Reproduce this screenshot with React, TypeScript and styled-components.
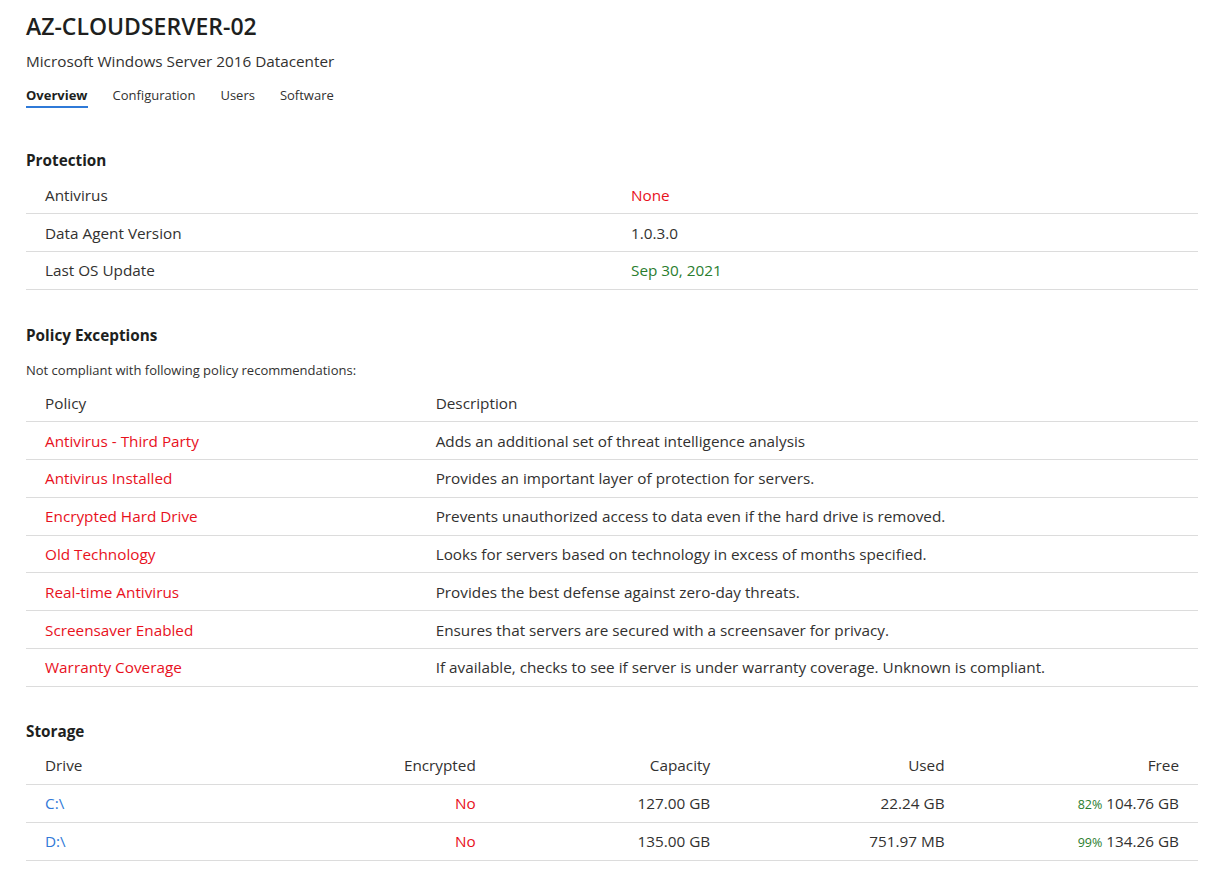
import styled, { createGlobalStyle } from 'styled-components'

const GlobalStyle = createGlobalStyle`
  body {
    margin: 0;
    background: #ffffff;
    color: #323130;
    font-family: "Open Sans", "Noto Sans", sans-serif;
  }
`

type Align = 'left' | 'right'

type Drive = {
  name: string;
  encrypted: string;
  capacity: string;
  used: string;
  freePct: string;
  free: string;
}

const protection = [
  { label: 'Antivirus', value: 'None', tone: 'bad' },
  { label: 'Data Agent Version', value: '1.0.3.0', tone: 'plain' },
  { label: 'Last OS Update', value: 'Sep 30, 2021', tone: 'good' },
]

const policies = [
  ['Antivirus - Third Party', 'Adds an additional set of threat intelligence analysis'],
  ['Antivirus Installed', 'Provides an important layer of protection for servers.'],
  ['Encrypted Hard Drive', 'Prevents unauthorized access to data even if the hard drive is removed.'],
  ['Old Technology', 'Looks for servers based on technology in excess of months specified.'],
  ['Real-time Antivirus', 'Provides the best defense against zero-day threats.'],
  ['Screensaver Enabled', 'Ensures that servers are secured with a screensaver for privacy.'],
  ['Warranty Coverage', 'If available, checks to see if server is under warranty coverage. Unknown is compliant.'],
]

const drives: Drive[] = [
  { name: 'C:\\', encrypted: 'No', capacity: '127.00 GB', used: '22.24 GB', freePct: '82%', free: '104.76 GB' },
  { name: 'D:\\', encrypted: 'No', capacity: '135.00 GB', used: '751.97 MB', freePct: '99%', free: '134.26 GB' },
]

const tabs = ['Overview', 'Configuration', 'Users', 'Software']

export default function App() {
  return (
    <>
      <GlobalStyle />
      <Page>
        <Title>AZ-CLOUDSERVER-02</Title>
        <Subtitle>Microsoft Windows Server 2016 Datacenter</Subtitle>
        <Tabs>
          {tabs.map((t, i) => (
            <Tab key={t} $active={i === 0}>{t}</Tab>
          ))}
        </Tabs>

        <Section $top={42}>
          <SectionTitle>Protection</SectionTitle>
          <Table>
            <colgroup>
              <col style={{ width: '50%' }} />
              <col style={{ width: '50%' }} />
            </colgroup>
            <tbody>
              {protection.map(row => (
                <tr key={row.label}>
                  <Cell>{row.label}</Cell>
                  <Cell $tone={row.tone}>{row.value}</Cell>
                </tr>
              ))}
            </tbody>
          </Table>
        </Section>

        <Section $top={35}>
          <SectionTitle>Policy Exceptions</SectionTitle>
          <Note>Not compliant with following policy recommendations:</Note>
          <Table>
            <colgroup>
              <col style={{ width: '33.333%' }} />
              <col style={{ width: '66.667%' }} />
            </colgroup>
            <thead>
              <tr>
                <Head>Policy</Head>
                <Head>Description</Head>
              </tr>
            </thead>
            <tbody>
              {policies.map(([name, desc]) => (
                <tr key={name}>
                  <Cell $tone="bad">{name}</Cell>
                  <Cell>{desc}</Cell>
                </tr>
              ))}
            </tbody>
          </Table>
        </Section>

        <Section $top={34}>
          <SectionTitle>Storage</SectionTitle>
          <Table>
            <thead>
              <tr>
                <Head>Drive</Head>
                <Head $align="right">Encrypted</Head>
                <Head $align="right">Capacity</Head>
                <Head $align="right">Used</Head>
                <Head $align="right">Free</Head>
              </tr>
            </thead>
            <tbody>
              {drives.map(d => (
                <tr key={d.name}>
                  <Cell $tone="link">{d.name}</Cell>
                  <Cell $align="right" $tone="bad">{d.encrypted}</Cell>
                  <Cell $align="right">{d.capacity}</Cell>
                  <Cell $align="right">{d.used}</Cell>
                  <Cell $align="right">
                    <Pct>{d.freePct}</Pct> {d.free}
                  </Cell>
                </tr>
              ))}
            </tbody>
          </Table>
        </Section>
      </Page>
    </>
  )
}

const toneColor = (tone?: string) => {
  switch (tone) {
    case 'bad': return '#e8111d'
    case 'good': return '#2a7d2e'
    case 'link': return '#3179d8'
    default: return '#323130'
  }
}

const Page = styled.div`
  padding: 10px 15px 16px 26px;
`

const Title = styled.h1`
  margin: 0;
  font-size: 23px;
  font-weight: 600;
  line-height: 32px;
  color: #201f1e;
`

const Subtitle = styled.div`
  margin-top: 9px;
  font-size: 15.3px;
  line-height: 20px;
`

const Tabs = styled.div`
  display: flex;
  gap: 25px;
  margin-top: 15px;
`

const Tab = styled.div<{ $active?: boolean }>`
  font-size: 13px;
  line-height: 18px;
  padding-bottom: 2px;
  font-weight: ${p => (p.$active ? 700 : 400)};
  color: ${p => (p.$active ? '#201f1e' : '#323130')};
  border-bottom: 2px solid ${p => (p.$active ? '#2f7ad8' : 'transparent')};
`

const Section = styled.section<{ $top: number }>`
  margin-top: ${p => p.$top}px;
`

const SectionTitle = styled.h2`
  margin: 0;
  font-size: 15.3px;
  font-weight: 700;
  line-height: 20px;
  color: #201f1e;
`

const Note = styled.div`
  margin-top: 17px;
  font-size: 13px;
  line-height: 16px;
`

const Table = styled.table`
  width: 100%;
  border-collapse: collapse;
  table-layout: fixed;
  margin-top: 6px;
`

const Head = styled.th<{ $align?: Align }>`
  padding: 0 19px;
  height: 37.8px;
  box-sizing: border-box;
  font-size: 15.3px;
  font-weight: 400;
  text-align: ${p => p.$align ?? 'left'};
  border-bottom: 1px solid #dcdcdc;
  color: #323130;
`

const Cell = styled.td<{ $align?: Align; $tone?: string }>`
  padding: 0 19px;
  height: 37.8px;
  box-sizing: border-box;
  font-size: 15.3px;
  text-align: ${p => p.$align ?? 'left'};
  border-bottom: 1px solid #dcdcdc;
  color: ${p => toneColor(p.$tone)};
`

const Pct = styled.span`
  font-size: 12.5px;
  color: #2a7d2e;
`
